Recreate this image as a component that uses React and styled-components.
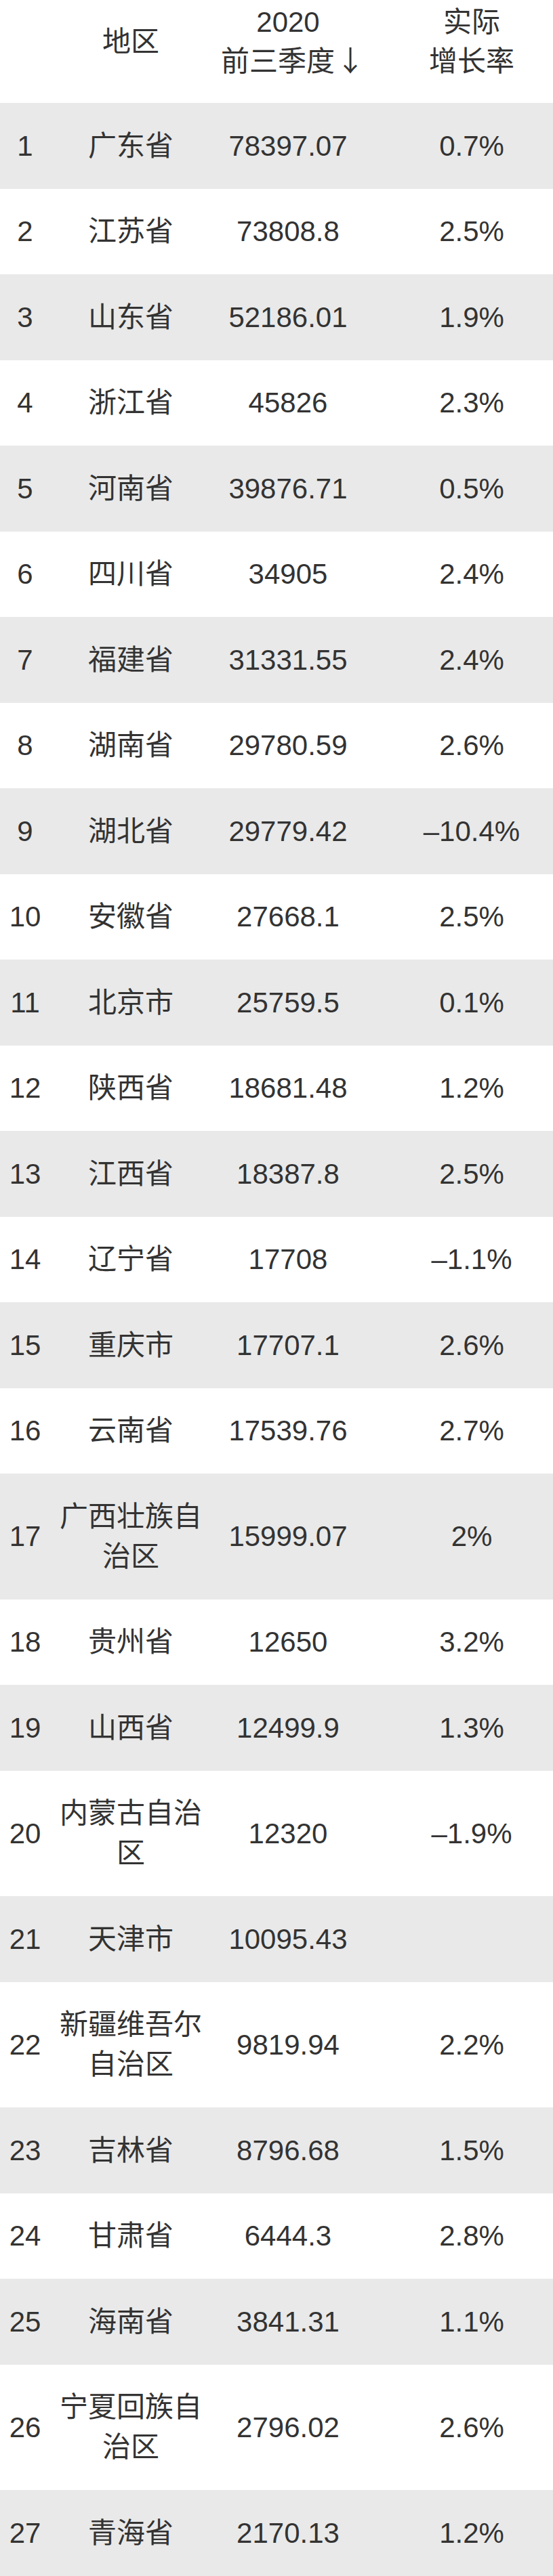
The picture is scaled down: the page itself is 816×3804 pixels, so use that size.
import React from "react";
import styled, { createGlobalStyle } from "styled-components";

const rows = [
  ["1", "广东省", "78397.07", "0.7%"],
  ["2", "江苏省", "73808.8", "2.5%"],
  ["3", "山东省", "52186.01", "1.9%"],
  ["4", "浙江省", "45826", "2.3%"],
  ["5", "河南省", "39876.71", "0.5%"],
  ["6", "四川省", "34905", "2.4%"],
  ["7", "福建省", "31331.55", "2.4%"],
  ["8", "湖南省", "29780.59", "2.6%"],
  ["9", "湖北省", "29779.42", "–10.4%"],
  ["10", "安徽省", "27668.1", "2.5%"],
  ["11", "北京市", "25759.5", "0.1%"],
  ["12", "陕西省", "18681.48", "1.2%"],
  ["13", "江西省", "18387.8", "2.5%"],
  ["14", "辽宁省", "17708", "–1.1%"],
  ["15", "重庆市", "17707.1", "2.6%"],
  ["16", "云南省", "17539.76", "2.7%"],
  ["17", "广西壮族自治区", "15999.07", "2%"],
  ["18", "贵州省", "12650", "3.2%"],
  ["19", "山西省", "12499.9", "1.3%"],
  ["20", "内蒙古自治区", "12320", "–1.9%"],
  ["21", "天津市", "10095.43", ""],
  ["22", "新疆维吾尔自治区", "9819.94", "2.2%"],
  ["23", "吉林省", "8796.68", "1.5%"],
  ["24", "甘肃省", "6444.3", "2.8%"],
  ["25", "海南省", "3841.31", "1.1%"],
  ["26", "宁夏回族自治区", "2796.02", "2.6%"],
  ["27", "青海省", "2170.13", "1.2%"],
];

const GlobalStyle = createGlobalStyle`
  html, body {
    margin: 0;
    padding: 0;
    background: #ffffff;
  }
  body {
    font-family: "Liberation Sans", "Noto Sans CJK SC", sans-serif;
    color: #333333;
  }
`;

const Table = styled.div`
  width: 816px;
  display: flex;
  flex-direction: column;
`;

const Row = styled.div`
  display: grid;
  grid-template-columns: 74px 238px 226px 1fr;
  align-items: center;
  background: ${(p) => (p.$striped ? "#e9e9e9" : "#ffffff")};
  padding: ${(p) => (p.$head ? "4px 0 32px" : "33.75px 0")};
  font-size: 42px;
  line-height: ${(p) => (p.$head ? "58px" : "59px")};
`;

const Cell = styled.div`
  text-align: center;
  white-space: ${(p) => (p.$wrap ? "normal" : "nowrap")};
  padding-left: ${(p) => (p.$last ? "38px" : "0")};
`;

const SortArrow = styled.span`
  font-family: "Noto Sans CJK SC", sans-serif;
  display: inline-block;
  line-height: 30px;
  margin-left: 2px;
  margin-right: -14px;
`;

export default function App() {
  return (
    <>
      <GlobalStyle />
      <Table>
        <Row $head>
          <Cell></Cell>
          <Cell>地区</Cell>
          <Cell>
            2020
            <br />
            前三季度<SortArrow>↓</SortArrow>
          </Cell>
          <Cell $last>
            实际
            <br />
            增长率
          </Cell>
        </Row>
        {rows.map((r, i) => (
          <Row key={r[0]} $striped={i % 2 === 0}>
            <Cell>{r[0]}</Cell>
            <Cell $wrap>{r[1]}</Cell>
            <Cell>{r[2]}</Cell>
            <Cell $last>{r[3]}</Cell>
          </Row>
        ))}
      </Table>
    </>
  );
}
